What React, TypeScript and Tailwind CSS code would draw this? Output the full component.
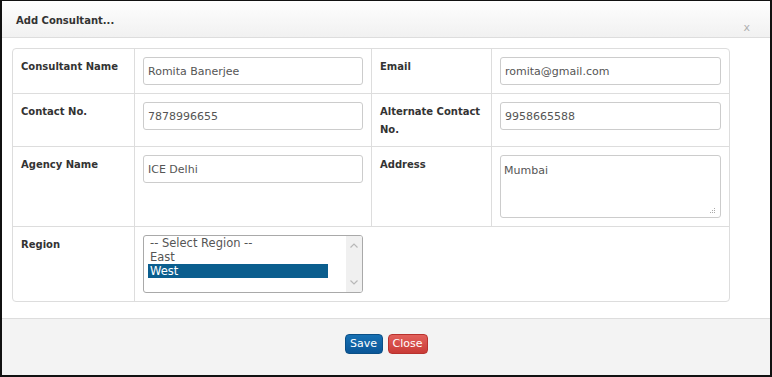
const font = { fontFamily: '"DejaVu Sans", Tahoma, sans-serif' };

const Label = ({ children }: { children: React.ReactNode }) => (
  <div className="px-2 pb-[7px] pt-[9px] text-[10px] font-bold leading-[18px] text-[#333]">{children}</div>
);

const TextInput = ({ value }: { value: string }) => (
  <div className="h-[28px] w-full rounded-[3px] border border-[#ccc] bg-white pl-[4px] pt-[1px] text-[11px] leading-[26px] text-[#555]">
    {value}
  </div>
);

const Grip = () => (
  <svg width="7" height="6" viewBox="0 0 7 6" className="absolute bottom-[3px] right-[4px]">
    <rect x="5" y="0" width="1" height="1" fill="#aaa" />
    <rect x="3" y="2" width="1" height="1" fill="#aaa" />
    <rect x="5" y="2" width="1" height="1" fill="#aaa" />
    <rect x="1" y="4" width="1" height="1" fill="#aaa" />
    <rect x="3" y="4" width="1" height="1" fill="#aaa" />
    <rect x="5" y="4" width="1" height="1" fill="#aaa" />
  </svg>
);

const RegionList = () => {
  const options = ['-- Select Region --', 'East', 'West'];
  return (
    <div className="flex h-[58px] w-[220px] overflow-hidden rounded-[3px] border border-[#a9a9a9] bg-white">
      <div className="flex-1 pl-[4px]">
        {options.map((o) => (
          <div
            key={o}
            className={
              o === 'West'
                ? 'h-[14px] w-[180px] bg-[#0b5e8e] px-[2px] text-[11.5px] leading-[14px] text-white'
                : 'h-[14px] w-[180px] px-[2px] text-[11.5px] leading-[14px] text-[#555]'
            }
          >
            {o}
          </div>
        ))}
      </div>
      <div className="flex w-[16px] flex-col items-center justify-between bg-[#f0f0f0] py-[7px]">
        <svg width="8" height="5" viewBox="0 0 8 5">
          <path d="M0.5 4.5 L4 1 L7.5 4.5" fill="none" stroke="#b8b8b8" strokeWidth="1.2" />
        </svg>
        <svg width="8" height="5" viewBox="0 0 8 5">
          <path d="M0.5 0.5 L4 4 L7.5 0.5" fill="none" stroke="#b8b8b8" strokeWidth="1.2" />
        </svg>
      </div>
    </div>
  );
};

export default function App() {
  return (
    <div
      style={font}
      className="flex h-[377px] w-[772px] flex-col border-b-2 border-l-2 border-r-2 border-t border-[#111] bg-white"
    >
      {/* header */}
      <div className="relative flex h-[37px] items-center border-b border-[#ddd] bg-gradient-to-b from-[#fefefe] to-[#f1f1f1] pl-[14px] pt-[3px]">
        <span className="text-[10px] font-bold text-[#333]">Add Consultant...</span>
        <span className="absolute right-[20px] top-[22px] text-[11px] leading-[10px] text-[#b0b0b0]">x</span>
      </div>

      {/* body */}
      <div className="flex-1 pl-[10px] pt-[10px]">
        <div className="w-[718px] rounded-[4px] border border-[#ddd]">
          <div className="grid grid-cols-[121px_237px_120px_238px]">
            <Label>Consultant Name</Label>
            <div className="border-l border-[#ddd] p-2">
              <TextInput value="Romita Banerjee" />
            </div>
            <div className="border-l border-[#ddd]">
              <Label>Email</Label>
            </div>
            <div className="border-l border-[#ddd] p-2">
              <TextInput value="romita@gmail.com" />
            </div>
          </div>

          <div className="grid grid-cols-[121px_237px_120px_238px] border-t border-[#ddd]">
            <Label>Contact No.</Label>
            <div className="border-l border-[#ddd] p-2">
              <TextInput value="7878996655" />
            </div>
            <div className="border-l border-[#ddd]">
              <Label>
                Alternate Contact
                <br />
                No.
              </Label>
            </div>
            <div className="border-l border-[#ddd] p-2">
              <TextInput value="9958665588" />
            </div>
          </div>

          <div className="grid grid-cols-[121px_237px_120px_238px] border-t border-[#ddd]">
            <Label>Agency Name</Label>
            <div className="border-l border-[#ddd] p-2">
              <TextInput value="ICE Delhi" />
            </div>
            <div className="border-l border-[#ddd]">
              <Label>Address</Label>
            </div>
            <div className="border-l border-[#ddd] p-2">
              <div className="relative h-[63px] w-full rounded-[3px] border border-[#ccc] bg-white pl-[3px] pt-[7px] text-[11px] leading-[16px] text-[#555]">
                Mumbai
                <Grip />
              </div>
            </div>
          </div>

          <div className="grid grid-cols-[121px_237px_358px] border-t border-[#ddd]">
            <Label>Region</Label>
            <div className="border-l border-[#ddd] p-2">
              <RegionList />
            </div>
            <div />
          </div>
        </div>
      </div>

      {/* footer */}
      <div className="flex h-[57px] justify-center gap-[5px] border-t border-[#ddd] bg-[#f3f3f3] pt-[15px]">
        <button className="h-[20px] w-[38px] rounded-[4px] border border-[#0a4f86] bg-gradient-to-b from-[#1670b3] to-[#0a5698] text-[11px] text-white">
          Save
        </button>
        <button className="h-[20px] w-[40px] rounded-[4px] border border-[#b8322e] bg-gradient-to-b from-[#e2605b] to-[#c93a36] text-[11px] text-white">
          Close
        </button>
      </div>
    </div>
  );
}
